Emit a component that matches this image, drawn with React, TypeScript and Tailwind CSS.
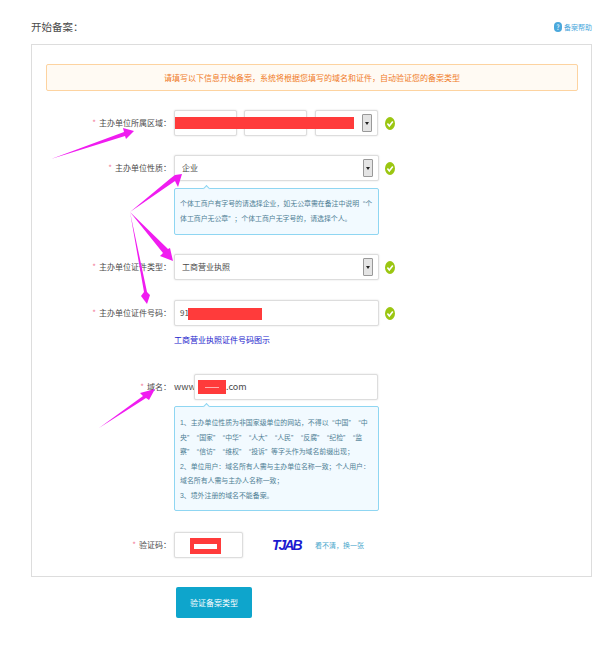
import React from "react";

const font = { fontFamily: '"Noto Sans CJK SC", "Liberation Sans", sans-serif' };
const hintFont = { fontFamily: '"Liberation Sans", "Noto Sans CJK SC", sans-serif' };

function Label({ children }: { children: React.ReactNode }) {
  return (
    <div className="w-[128px] shrink-0 pr-[3px] text-right text-[8px] text-[#4a4a4a]">
      <span className="text-[#f37b9a] mr-[3px]">*</span>
      {children}
    </div>
  );
}

function Check() {
  return (
    <svg width="10" height="13" viewBox="0 0 10 13" className="shrink-0">
      <ellipse cx="5" cy="6.5" rx="5" ry="6.5" fill="#9bc611" />
      <path d="M2.4 6.6 L4.3 9 L7.8 4.4" fill="none" stroke="#fff" strokeWidth="1.6" />
    </svg>
  );
}

function Arrow() {
  return (
    <span className="absolute top-[3px] bottom-[3px] right-[5px] w-[10px] flex items-center justify-center bg-[#e4e4e4] border border-[#999] rounded-[1px]">
      <span className="w-0 h-0 border-l-[2.5px] border-r-[2.5px] border-t-[3px] border-l-transparent border-r-transparent border-t-[#222]" />
    </span>
  );
}

function Box({ w, children, arrow }: { w: string; children?: React.ReactNode; arrow?: boolean }) {
  return (
    <div className={`${w} relative h-[26px] shrink-0 flex items-center pl-[7px] bg-white border border-[#ddd] rounded-[2px] text-[8px] text-[#4a4a4a] shadow-[0_0_2px_#ddd]`}>
      {children}
      {arrow && <Arrow />}
    </div>
  );
}

function Hint({ children, h }: { children: React.ReactNode; h: string }) {
  return (
    <div className={`${h} relative w-[205px] border border-[#8fd6f2] rounded-[2px] bg-[#f2faff] px-[5px] text-[6.9px] text-[#4f7f95] whitespace-pre`} style={hintFont}>
      <span className="absolute -top-[3px] left-[29px] w-[5px] h-[5px] rotate-45 bg-[#f2faff] border-l border-t border-[#8fd6f2]" />
      {children}
    </div>
  );
}

export default function App() {
  return (
    <div className="relative w-[597px] h-[665px] bg-white overflow-hidden" style={font}>
      <div className="flex justify-between items-end h-[44px] pl-[31px] pr-[5px] pb-[8px]">
        <span className="text-[10.5px] leading-[18px] text-[#4a4a4a]">开始备案：</span>
        <span className="flex items-center gap-[2px] text-[7px] leading-[10px] text-[#4aa8dc] mb-[4px]">
          <span className="w-[8px] h-[10px] rounded-full bg-[#4aa8dc] text-white text-center text-[7px] leading-[10px]">?</span>
          备案帮助
        </span>
      </div>

      <div className="ml-[31px] w-[561px] h-[533px] border border-[#ddd] pt-[19px] px-[14px]">
        <div className="h-[27px] w-[532px] flex items-center justify-center border border-[#fdd3a0] rounded-[2px] bg-[#fffaf3] text-[8px] text-[#f07a28]">
          请填写以下信息开始备案，系统将根据您填写的域名和证件，自动验证您的备案类型
        </div>

        <div className="flex items-center mt-[19px] h-[26px]">
          <Label>主办单位所属区域：</Label>
          <div className="flex gap-[7px] items-center relative">
            <Box w="w-[63px]" />
            <Box w="w-[63px]" />
            <div className="ml-[1px]"><Box w="w-[63px]" arrow /></div>
            <span className="absolute left-[1px] top-[7px] w-[179px] h-[12px] bg-[#ff3b3b]" />
          </div>
          <div className="ml-[7px]"><Check /></div>
        </div>

        <div className="flex items-center mt-[19px] h-[26px]">
          <Label>主办单位性质：</Label>
          <Box w="w-[205px]" arrow>企业</Box>
          <div className="ml-[6px]"><Check /></div>
        </div>
        <div className="ml-[128px] mt-[7px]">
          <Hint h="h-[47px]">
            <p className="leading-[15px] pt-[7px]">{"个体工商户有字号的请选择企业，如无公章需在备注中说明  “个\n体工商户无公章”  ；个体工商户无字号的，请选择个人。"}</p>
          </Hint>
        </div>

        <div className="flex items-center mt-[19px] h-[26px]">
          <Label>主办单位证件类型：</Label>
          <Box w="w-[205px]" arrow>工商营业执照</Box>
          <div className="ml-[6px]"><Check /></div>
        </div>

        <div className="flex items-center mt-[20px] h-[26px]">
          <Label>主办单位证件号码：</Label>
          <Box w="w-[205px]">
            <span className="-ml-[2px] text-[8px]">91</span>
            <span className="absolute left-[13px] top-[7px] w-[74px] h-[12px] bg-[#ff3b3b]" />
          </Box>
          <div className="ml-[6px]"><Check /></div>
        </div>
        <div className="ml-[128px] mt-[8px] text-[8px] leading-[11px] text-[#2222cc]">工商营业执照证件号码图示</div>

        <div className="flex items-center mt-[29px] h-[26px]">
          <Label>域名：</Label>
          <span className="w-[20px] text-[9px] text-[#4a4a4a]">www.</span>
          <Box w="w-[184px]">
            <span className="absolute left-[3px] top-[5px] w-[28px] h-[14px] bg-[#ff3b3b] flex items-center justify-center">
              <span className="w-[14px] h-px bg-[#ffb0b0]" />
            </span>
            <span className="ml-[24px] text-[9px]">.com</span>
          </Box>
        </div>
        <div className="ml-[128px] mt-[6px]">
          <Hint h="h-[105px]">
            <p className="leading-[14.5px] pt-[9px]">{"1、主办单位性质为非国家级单位的网站，不得以  “中国”    “中\n央”    “国家”    “中华”    “人大”    “人民”    “反腐”    “纪检”    “监\n察”    “信访”    “维权”    “投诉”  等字头作为域名前缀出现；\n2、单位用户：域名所有人需与主办单位名称一致；个人用户：\n域名所有人需与主办人名称一致；\n3、境外注册的域名不能备案。"}</p>
          </Hint>
        </div>

        <div className="flex items-center mt-[21px] h-[26px]">
          <Label>验证码：</Label>
          <Box w="w-[69px]">
            <span className="absolute left-[15px] top-[5px] w-[31px] h-[16px] bg-[#ff3b3b] flex items-center justify-center">
              <span className="w-[23px] h-[5px] bg-white" />
            </span>
          </Box>
          <span className="ml-[29px] w-[43px] text-[14px] font-bold italic text-[#1a1ad0] tracking-[-2px]" style={{ fontFamily: '"Liberation Sans", sans-serif' }}>TJAB</span>
          <span className="text-[7px] text-[#4aa8cc]">看不清，换一张</span>
        </div>
      </div>

      <div className="ml-[176px] mt-[10px] w-[76px] h-[31px] flex items-center justify-center rounded-[2px] bg-[#0ea5cc] text-[8px] text-white">
        验证备案类型
      </div>

      <svg className="absolute inset-0 pointer-events-none" width="597" height="665" viewBox="0 0 597 665">
        <g fill="#f01cf0">
          <polygon points="51,159 124,132 123,128 134,131 126,139 125,136" />
          <polygon points="130,212 171,178 175,175 182,174 178,187 175,181" />
          <polygon points="130,212 168,249 170,248 173,261 160,256 163,253" />
          <polygon points="130,212 144,292 141,296 147,304 150,295 147,292" />
          <polygon points="99,428 143,396 140,393 155,389 149,400 146,398" />
        </g>
      </svg>
    </div>
  );
}
